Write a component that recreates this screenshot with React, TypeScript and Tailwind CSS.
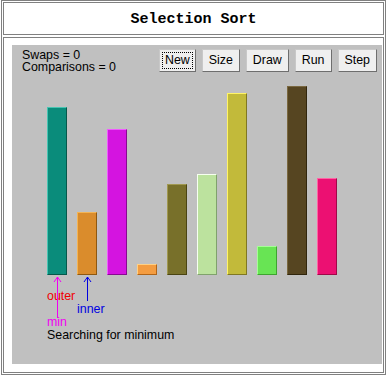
import React from 'react';

const bars = [
  { h: 168, cls: "bg-[#0a8c7b] border-t-[#48c4b2] border-l-[#48c4b2] border-b-[#05584a] border-r-[#05584a]" },
  { h: 63, cls: "bg-[#da8c2c] border-t-[#f4b454] border-l-[#f4b454] border-b-[#8e5810] border-r-[#8e5810]" },
  { h: 146, cls: "bg-[#d414e0] border-t-[#f05aff] border-l-[#f05aff] border-b-[#880a90] border-r-[#880a90]" },
  { h: 11, cls: "bg-[#f49c40] border-t-[#ffd084] border-l-[#ffd084] border-b-[#b06418] border-r-[#b06418]" },
  { h: 91, cls: "bg-[#78702a] border-t-[#a09850] border-l-[#a09850] border-b-[#4a4412] border-r-[#4a4412]" },
  { h: 101, cls: "bg-[#bce29e] border-t-[#f6fff0] border-l-[#f6fff0] border-b-[#80a26c] border-r-[#80a26c]" },
  { h: 182, cls: "bg-[#c2ba3a] border-t-[#fff466] border-l-[#fff466] border-b-[#807822] border-r-[#807822]" },
  { h: 29, cls: "bg-[#68e454] border-t-[#a4ff94] border-l-[#a4ff94] border-b-[#3ea430] border-r-[#3ea430]" },
  { h: 189, cls: "bg-[#564521] border-t-[#7a6840] border-l-[#7a6840] border-b-[#30250c] border-r-[#30250c]" },
  { h: 97, cls: "bg-[#ec1072] border-t-[#ff62a4] border-l-[#ff62a4] border-b-[#a00848] border-r-[#a00848]" },
];

const buttons = ['New', 'Size', 'Draw', 'Run', 'Step'];

function Arrow({ x, len, color }: { x: number; len: number; color: string }) {
  return (
    <>
      <line x1={x} y1={2} x2={x} y2={len} stroke={color} strokeWidth={1} />
      <polyline points={`${x - 3.5},7 ${x},2 ${x + 3.5},7`} fill="none" stroke={color} strokeWidth={1} />
    </>
  );
}

export default function App() {
  return (
    <div className="w-[386px] h-[376px] bg-white overflow-hidden">
      <div className="ml-px w-[385px] h-[375px] border border-[#808080] p-px flex flex-col gap-[2px]">
        <div className="h-[33px] pt-[3px] border border-[#808080] flex items-center justify-center font-['Liberation_Mono',monospace] font-bold text-[15px] text-black">
          Selection Sort
        </div>
        <div className="flex-1 border border-[#808080] pl-[8px] pt-[7px]">
          <div className="w-[370px] h-[319px] bg-[#c0c0c0] flex flex-col font-['Liberation_Sans',Arial,sans-serif] text-[12.4px] text-black">
            {/* stats + controls */}
            <div className="pt-[4px] pl-[10px] pr-[5px] flex justify-between items-start">
              <div className="leading-[12px]">
                <div>Swaps = 0</div>
                <div>Comparisons = 0</div>
              </div>
              <div className="flex gap-[6px]">
                {buttons.map((b) => (
                  <button
                    key={b}
                    className={
                      b === 'New'
                        ? "h-[23px] px-[2px] py-[2px] bg-[#efefef] border border-[#c8c8c8] border-b-[#6e6e6e] border-r-[#6e6e6e] leading-none flex items-center"
                        : "h-[23px] px-[6px] bg-[#efefef] border border-[#c8c8c8] border-b-[#6e6e6e] border-r-[#6e6e6e] leading-none flex items-center"
                    }
                  >
                    {b === 'New' ? (
                      <span className="h-full flex items-center px-[2px] border border-dotted border-black">{b}</span>
                    ) : (
                      b
                    )}
                  </button>
                ))}
              </div>
            </div>

            {/* bars */}
            <div className="h-[202px] pl-[35px] flex items-end gap-[10px]">
              {bars.map((bar, i) => (
                <div key={i} className={`w-[20px] border ${bar.cls}`} style={{ height: bar.h }} />
              ))}
            </div>

            {/* pointers */}
            <div className="relative flex-1">
              <div className="pl-[35px] pt-[15px] leading-[13px]">
                <div className="text-[#f00000]">outer</div>
                <div className="ml-[30px] text-[#0000e0]">inner</div>
                <div className="text-[#f000f0]">min</div>
                <div>Searching for minimum</div>
              </div>
              <svg className="absolute left-0 top-0" width="370" height="50">
                <Arrow x={45.5} len={43} color="#f000f0" />
                <Arrow x={75.5} len={26} color="#0000e0" />
              </svg>
            </div>
          </div>
        </div>
      </div>
    </div>
  );
}
